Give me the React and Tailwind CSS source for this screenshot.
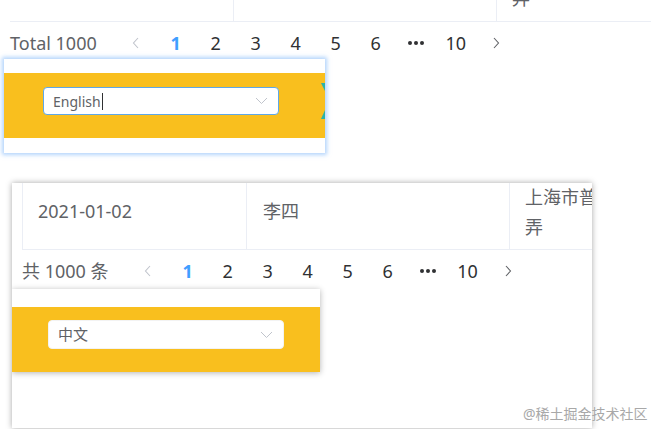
import React from "react";

const font = { fontFamily: '"Noto Sans", "Noto Sans CJK SC", sans-serif' };

function Chevron({ dir = "left", color = "#c0c4cc" }) {
  return (
    <svg width="8" height="12" viewBox="0 0 8 12" fill="none">
      {dir === "left" ? (
        <path d="M6 1 L1.5 6 L6 11" stroke={color} strokeWidth="1.1" />
      ) : (
        <path d="M2 1 L6.5 6 L2 11" stroke={color} strokeWidth="1.1" />
      )}
    </svg>
  );
}

function Pager({ total }) {
  const pages = ["1", "2", "3", "4", "5", "6", "...", "10"];
  return (
    <div className="flex h-[42px] items-center">
      <span className="text-[18px] text-[#606266] whitespace-pre">{total}</span>
      <div className="ml-[19px] flex items-center">
        <div className="flex w-[40px] justify-center">
          <Chevron dir="left" color="#c0c4cc" />
        </div>
        {pages.map((p, i) => (
          <div
            key={i}
            className={
              "flex w-[40px] justify-center text-[18px] " +
              (p === "1" ? "font-bold text-[#409eff]" : "text-[#303133]")
            }
          >
            {p === "..." ? (
              <span className="flex items-center gap-[2px] h-[24px]">
                <span className="h-[4px] w-[4px] rounded-full bg-[#303133]" />
                <span className="h-[4px] w-[4px] rounded-full bg-[#303133]" />
                <span className="h-[4px] w-[4px] rounded-full bg-[#303133]" />
              </span>
            ) : (
              p
            )}
          </div>
        ))}
        <div className="flex w-[40px] justify-center">
          <Chevron dir="right" color="#606266" />
        </div>
      </div>
    </div>
  );
}

function SelectChevron() {
  return (
    <svg width="13" height="8" viewBox="0 0 13 8" fill="none">
      <path d="M1 1 L6.5 6.5 L12 1" stroke="#c0c4cc" strokeWidth="1" />
    </svg>
  );
}

export default function App() {
  return (
    <div className="relative h-[429px] w-[651px] overflow-hidden bg-white" style={font}>
      {/* Top section */}
      <div className="ml-[10px] flex h-[22px] border-b border-[#ebeef5] overflow-hidden">
        <div className="w-[224px] shrink-0 border-r border-[#ebeef5]" />
        <div className="w-[263px] shrink-0 border-r border-[#ebeef5]" />
        <div className="flex-1 pl-[15px]">
          <div className="-mt-[17px] text-[18px] leading-[30px] text-[#606266]">弄</div>
        </div>
      </div>
      <div className="pl-[10px]">
        <Pager total="Total 1000" />
      </div>

      {/* Top popup */}
      <div className="absolute left-[4px] top-[59px] w-[321px] bg-white pt-[14px] pb-[15px] shadow-[0_0_4px_2px_rgba(130,185,250,0.6)]">
        <div className="relative h-[65px] bg-[#f9bf1e] pt-[14px] pl-[39px]">
          <div className="flex h-[28px] w-[236px] items-center justify-between rounded-[4px] border border-[#5fa8e8] bg-white pl-[9px] pr-[10px]">
            <span className="flex items-center text-[14px] text-[#606266]">
              English<span className="ml-[1px] inline-block h-[17px] w-[1px] bg-[#303133]" />
            </span>
            <SelectChevron />
          </div>
          <svg className="absolute right-0 top-[10px]" width="5" height="36" viewBox="0 0 5 36">
            <path d="M1 0 L5 0 L5 8 Z" fill="#2bb3a8" />
            <path d="M1 36 L5 36 L5 27 Z" fill="#2bb3a8" />
          </svg>
        </div>
      </div>

      {/* Bottom box */}
      <div className="relative ml-[12px] mt-[119px] h-[245px] w-[580px] overflow-hidden bg-white shadow-[0_0_6px_rgba(0,0,0,0.35)]">
        <div className="ml-[10px] flex h-[67px] border-l border-b border-[#ebeef5]">
          <div className="w-[224px] shrink-0 border-r border-[#ebeef5] pl-[15px] pt-[13px] text-[18px] leading-[30px] text-[#606266]">
            2021-01-02
          </div>
          <div className="w-[263px] shrink-0 border-r border-[#ebeef5] pl-[16px] pt-[13px] text-[18px] leading-[30px] text-[#606266]">
            李四
          </div>
          <div className="min-w-0 flex-1 pl-[15px] -mt-[1px] text-[18px] leading-[30px] text-[#606266] whitespace-nowrap">
            <div>上海市普陀区</div>
            <div>弄</div>
          </div>
        </div>
        <div className="pl-[10px]">
          <Pager total="共 1000 条" />
        </div>

        {/* Inner popup */}
        <div className="absolute left-0 top-[106px] w-[308px] bg-white pt-[18px] shadow-[0_1px_6px_rgba(0,0,0,0.3)]">
          <div className="h-[65px] bg-[#f9bf1e] pt-[13px] pl-[36px]">
            <div className="flex h-[29px] w-[236px] items-center justify-between rounded-[4px] border border-[#f3f3f3] bg-white pl-[9px] pr-[10px]">
              <span className="text-[15px] text-[#606266]">中文</span>
              <SelectChevron />
            </div>
          </div>
        </div>
      </div>

      {/* Watermark */}
      <div className="absolute left-[523px] top-[403px] text-[14px] text-[#a8a8a8] [text-shadow:0_0_2px_white]">
        @稀土掘金技术社区
      </div>
    </div>
  );
}
